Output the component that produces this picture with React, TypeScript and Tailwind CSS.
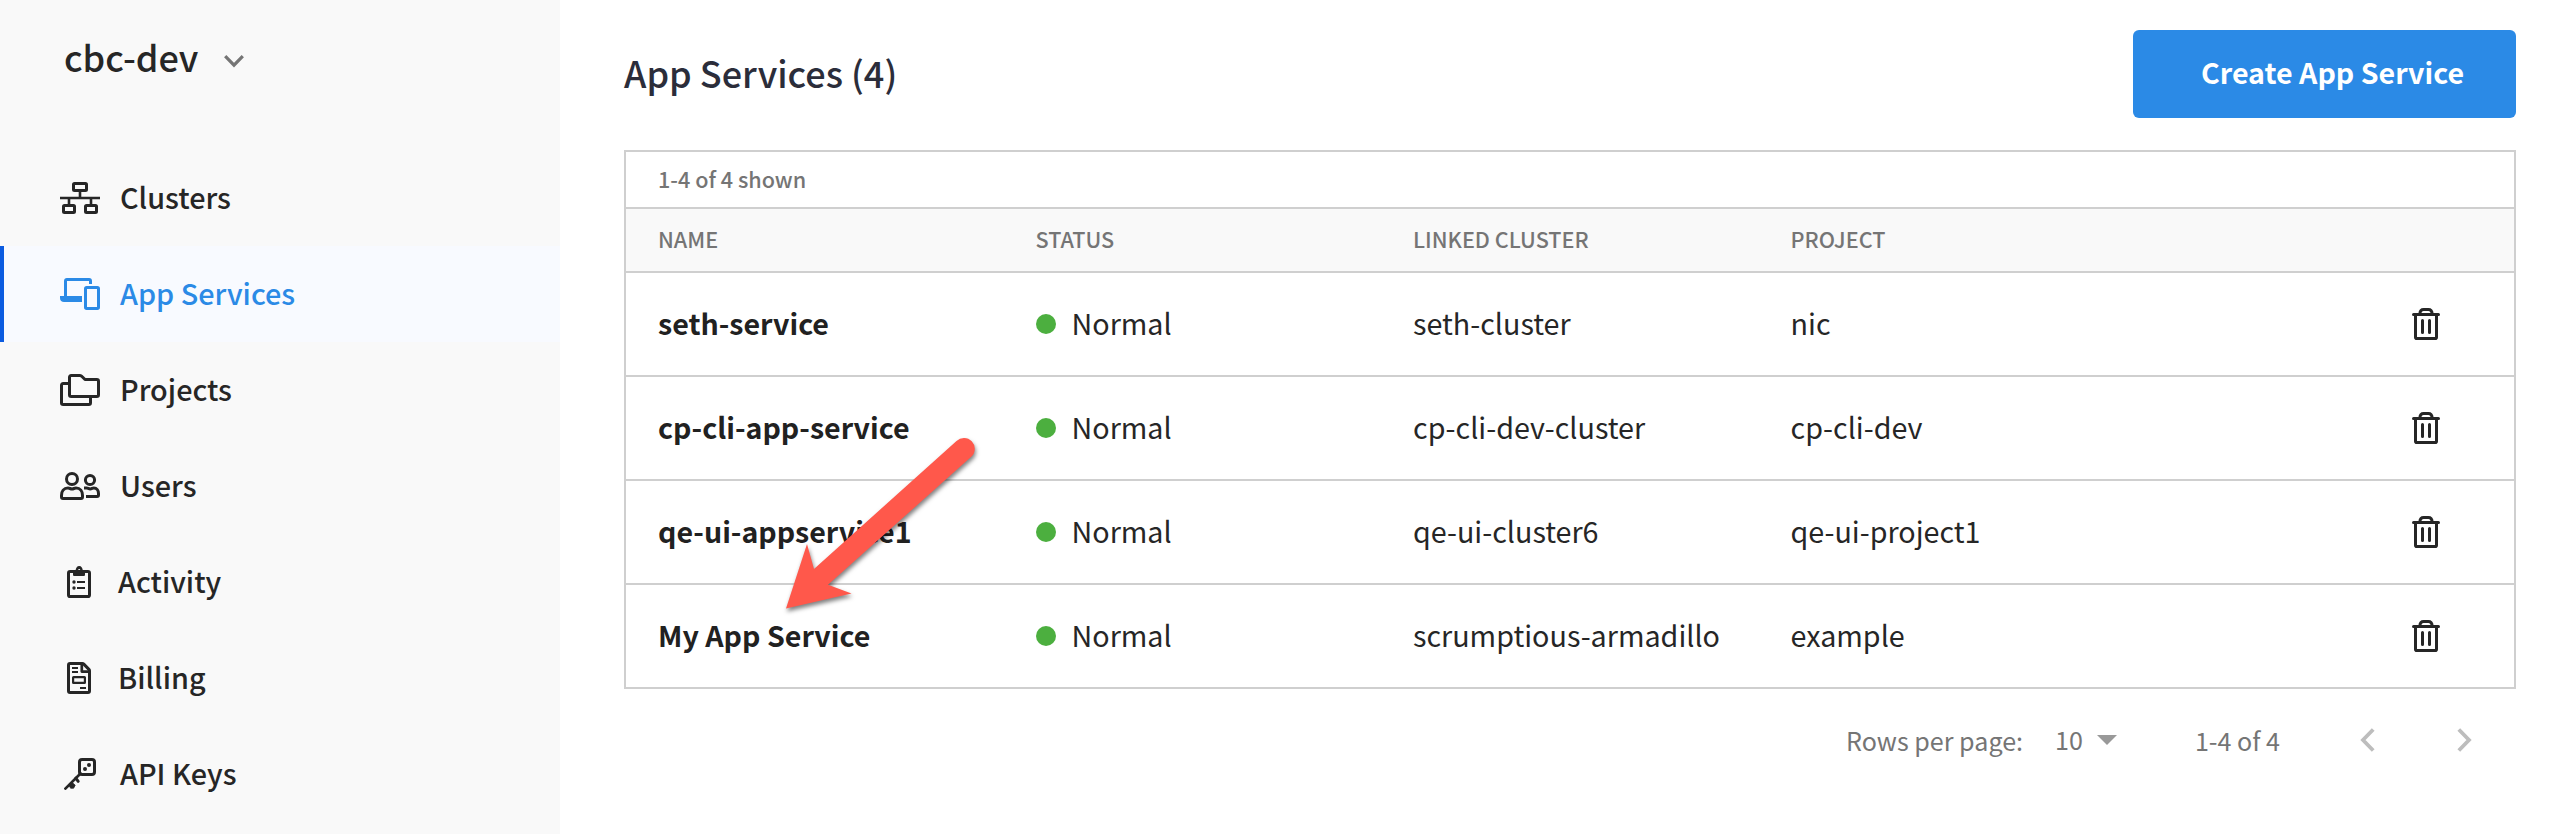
import type { ReactNode } from "react";

const svgBase = {
  fill: "none",
  stroke: "currentColor",
  strokeWidth: 3,
  strokeLinejoin: "round" as const,
};

function ClustersIcon() {
  return (
    <svg width="40" height="32" viewBox="0 0 40 32" {...svgBase}>
      <rect x="13.5" y="1.5" width="13" height="7" rx="1" />
      <rect x="3.5" y="23.5" width="11" height="7" rx="1" />
      <rect x="25.5" y="23.5" width="11" height="7" rx="1" />
      <path d="M0 16H40M20 9.5V16M9 16V23M31 16V23" strokeWidth="2.6" />
    </svg>
  );
}

function AppServicesIcon() {
  return (
    <svg width="40" height="32" viewBox="0 0 40 32" {...svgBase}>
      <path d="M5.5 19V2.9C5.5 2 6 1.5 6.9 1.5H29.1C30 1.5 30.5 2 30.5 2.9V6" />
      <path d="M0 18H22V24H4C1.6 24 0 22.4 0 20Z" fill="currentColor" stroke="none" />
      <rect x="25.5" y="9.5" width="13" height="21" rx="1.2" />
    </svg>
  );
}

function ProjectsIcon() {
  return (
    <svg width="40" height="32" viewBox="0 0 40 32" {...svgBase}>
      <path d="M9.5 3.2C9.5 2.1 10.1 1.5 11.2 1.5H20C21 1.5 21.4 1.8 22 2.5L25 5.5H36.8C37.9 5.5 38.5 6.1 38.5 7.2V20.8C38.5 21.9 37.9 22.5 36.8 22.5H11.2C10.1 22.5 9.5 21.9 9.5 20.8Z" />
      <path d="M9 9.5H3.2C2.1 9.5 1.5 10.1 1.5 11.2V28.8C1.5 29.9 2.1 30.5 3.2 30.5H28.8C29.9 30.5 30.5 29.9 30.5 28.8V23" />
    </svg>
  );
}

function UsersIcon() {
  return (
    <svg width="40" height="28" viewBox="0 0 40 28" {...svgBase}>
      <circle cx="12" cy="7" r="5.5" />
      <path d="M8 16C3.7 16 1.5 19.4 1.5 23.4V25C1.5 26 2 26.5 3 26.5H21C22 26.5 22.5 26 22.5 25V23.4C22.5 19.4 20.3 16 16 16C14.4 16 13.6 17 12 17C10.4 17 9.6 16 8 16Z" />
      <circle cx="30" cy="8" r="4.6" />
      <path d="M24 16H26.6C28 16 28.6 17 30.2 17C31.8 17 32.4 16 33.8 16C36.8 16 38.5 18.6 38.5 21.6V23C38.5 24 38 24.5 37 24.5H26" />
    </svg>
  );
}

function ActivityIcon() {
  return (
    <svg width="24" height="32" viewBox="0 0 24 32" {...svgBase}>
      <rect x="1.5" y="5.5" width="21" height="25" rx="1.6" />
      <path
        fillRule="evenodd"
        d="M6 5H8.6C8.6 2 10 0 12.2 0C14.4 0 15.8 2 15.8 5H18V8.5C18 9.5 17.5 10 16.5 10H7.5C6.5 10 6 9.5 6 8.5ZM12.2 3.1A1.1 1.1 0 1 0 12.2 5.3A1.1 1.1 0 1 0 12.2 3.1Z"
        fill="currentColor"
        stroke="none"
      />
      <circle cx="7" cy="16" r="1.7" fill="currentColor" stroke="none" />
      <circle cx="7" cy="22" r="1.7" fill="currentColor" stroke="none" />
      <path d="M10 16H18M10 22H18" strokeWidth="2.1" />
    </svg>
  );
}

function BillingIcon() {
  return (
    <svg width="24" height="32" viewBox="0 0 24 32" {...svgBase}>
      <path d="M3 1.5H15.4C16 1.5 16.4 1.7 16.8 2.1L21.9 7.4C22.3 7.8 22.5 8.2 22.5 8.8V29C22.5 30 22 30.5 21 30.5H3C2 30.5 1.5 30 1.5 29V3C1.5 2 2 1.5 3 1.5Z" />
      <path d="M14.8 1.5V9.6H22.5" strokeWidth="2.7" />
      <path d="M5 6H11M5 10H11M13 26H19" strokeWidth="2" />
      <rect x="6.1" y="15.1" width="11.8" height="5.8" rx="0.4" strokeWidth="2.2" />
    </svg>
  );
}

function ApiKeysIcon() {
  return (
    <svg width="32" height="32" viewBox="0 0 32 32" {...svgBase}>
      <rect x="15.5" y="1.5" width="15" height="15" rx="2.6" />
      <circle cx="21" cy="11" r="2" fill="currentColor" stroke="none" />
      <circle cx="25" cy="7" r="2" fill="currentColor" stroke="none" />
      <path d="M16.5 15.5L1.4 30.6" strokeLinecap="round" strokeWidth="2.7" />
      <path d="M11.8 20.2L14.2 23.4" strokeLinecap="round" strokeWidth="3" />
      <path d="M4.5 28.3L8.2 24.5L11.2 27.2L9.6 30.2H6.6L5.6 28.3Z" fill="currentColor" strokeWidth="0.8" />
    </svg>
  );
}

function TrashIcon() {
  return (
    <svg width="28" height="32" viewBox="0 0 28 32" {...svgBase}>
      <path d="M1.5 6.5H26.5" strokeLinecap="round" />
      <path d="M7.8 6C8 3.4 9.4 1.5 11.6 1.5H16.4C18.6 1.5 20 3.4 20.2 6" />
      <path d="M3.5 7V29.2C3.5 30 4 30.5 4.8 30.5H23.2C24 30.5 24.5 30 24.5 29.2V7" />
      <path d="M10.5 12.5V24.5M17.5 12.5V24.5" strokeLinecap="round" />
    </svg>
  );
}

type NavItem = { label: string; icon: ReactNode; active?: boolean; narrow?: boolean };

const navItems: NavItem[] = [
  { label: "Clusters", icon: <ClustersIcon /> },
  { label: "App Services", icon: <AppServicesIcon />, active: true },
  { label: "Projects", icon: <ProjectsIcon /> },
  { label: "Users", icon: <UsersIcon /> },
  { label: "Activity", icon: <ActivityIcon />, narrow: true },
  { label: "Billing", icon: <BillingIcon />, narrow: true },
  { label: "API Keys", icon: <ApiKeysIcon /> },
];

const services = [
  { name: "seth-service", status: "Normal", cluster: "seth-cluster", project: "nic" },
  { name: "cp-cli-app-service", status: "Normal", cluster: "cp-cli-dev-cluster", project: "cp-cli-dev" },
  { name: "qe-ui-appservice1", status: "Normal", cluster: "qe-ui-cluster6", project: "qe-ui-project1" },
  { name: "My App Service", status: "Normal", cluster: "scrumptious-armadillo", project: "example" },
];

function Sidebar() {
  return (
    <aside className="flex w-[560px] shrink-0 flex-col bg-[#f9f9f9]">
      <button className="flex h-[150px] items-start gap-[26px] pt-[30px] pl-[64px]">
        <span className="text-[36px] leading-[53px] font-medium">cbc-dev</span>
        <svg className="mt-[25px] text-[#757575]" width="20" height="14" viewBox="0 0 20 14" fill="none" stroke="currentColor" strokeWidth="3.2">
          <path d="M1.2 1.2L10 10.2L18.8 1.2" />
        </svg>
      </button>
      <nav>
        {navItems.map((item) => (
          <a
            key={item.label}
            className={
              item.active
                ? "flex h-[96px] items-center border-l-4 border-[#0b5be0] bg-[#f8faff] pl-[56px] text-[#2b8ae6]"
                : "flex h-[96px] items-center pl-[60px]"
            }
          >
            <span className={item.narrow ? "flex w-[38px] justify-center" : "flex w-[40px] justify-center"}>
              {item.icon}
            </span>
            <span className="ml-[20px] pb-[3px] text-[28.8px] leading-[42px] font-medium">{item.label}</span>
          </a>
        ))}
      </nav>
    </aside>
  );
}

function PointerArrow() {
  return (
    <svg
      className="pointer-events-none absolute top-[425px] left-[770px]"
      width="220"
      height="200"
      viewBox="770 425 220 200"
    >
      <path
        d="M786 608.5L807 544L814 569L956.5 441A10.6 10.6 0 0 1 971.5 456.5L828 584.8L851.5 593.5Z"
        className="fill-[#ff584b] drop-shadow-[1px_3px_2px_rgba(0,0,0,0.5)]"
      />
    </svg>
  );
}

const columns = "grid grid-cols-[377.5px_377.5px_377.5px_1fr_auto] items-center";

export default function App() {
  return (
    <div className="relative flex h-[834px] w-[2576px] overflow-hidden bg-white font-['Noto_Sans_CJK_SC',sans-serif] text-[#262626]">
      <Sidebar />
      <main className="flex flex-1 flex-col pt-[30px] pr-[60px] pl-[64px]">
        <header className="flex h-[88px] items-center justify-between">
          <h1 className="pb-[3px] text-[36px] leading-[53px] font-medium text-[#2b2d3a]">App Services (4)</h1>
          <button className="flex h-[88px] w-[383px] items-center rounded-[6px] bg-[#2b8ae6] pb-[3px] pl-[68px] text-[28.6px] font-bold whitespace-nowrap text-white">
            Create App Service
          </button>
        </header>

        <section className="mt-[32px] border-2 border-[#cfcfcf]">
          <div className="flex h-[57px] items-center border-b-2 border-[#cfcfcf] pb-[2px] pl-[32px] text-[21.6px] leading-[32px] font-medium text-[#757575]">
            1-4 of 4 shown
          </div>
          <div className={`${columns} h-[64px] border-b-2 border-[#cfcfcf] bg-[#f9f9f9] pb-[2px] pl-[32px] text-[21.6px] leading-[32px] font-medium text-[#757575]`}>
            <span>NAME</span>
            <span>STATUS</span>
            <span>LINKED CLUSTER</span>
            <span>PROJECT</span>
          </div>
          {services.map((s) => (
            <div
              key={s.name}
              className={`${columns} h-[104px] border-b-2 border-[#cfcfcf] pr-[74px] pl-[32px] text-[28.7px] leading-[42px] last:h-[102px] last:border-b-0`}
            >
              <span className="pb-[3px] text-[28.6px] font-bold text-[#212121]">{s.name}</span>
              <span className="flex items-center gap-[16px]">
                <span className="size-[20px] rounded-full bg-[#4caf3f]" />
                <span className="pb-[3px]">{s.status}</span>
              </span>
              <span className="pb-[3px]">{s.cluster}</span>
              <span className="pb-[3px]">{s.project}</span>
              <TrashIcon />
            </div>
          ))}
        </section>

        <footer className="flex h-[102px] items-center justify-end pr-[44px] text-[25.1px] leading-[36px] text-[#757575]">
          <span>Rows per page:</span>
          <span className="ml-[32px] pb-[3px]">10</span>
          <svg className="ml-[14px] text-[#999999]" width="20" height="10" viewBox="0 0 20 10" fill="currentColor">
            <path d="M0 0H20L10 10Z" />
          </svg>
          <span className="ml-[78px]">1-4 of 4</span>
          <svg className="ml-[80px] text-[#bdbdbd]" width="15" height="24" viewBox="0 0 15 24" fill="none" stroke="currentColor" strokeWidth="3.8">
            <path d="M13.2 1.5L3 12L13.2 22.5" />
          </svg>
          <svg className="ml-[82px] text-[#bdbdbd]" width="15" height="24" viewBox="0 0 15 24" fill="none" stroke="currentColor" strokeWidth="3.8">
            <path d="M1.8 1.5L12 12L1.8 22.5" />
          </svg>
        </footer>
      </main>
      <PointerArrow />
    </div>
  );
}
